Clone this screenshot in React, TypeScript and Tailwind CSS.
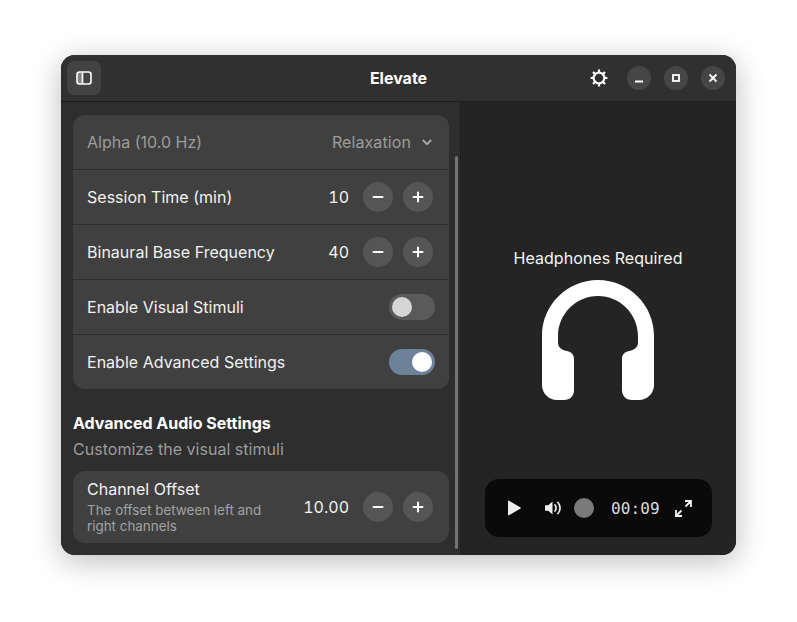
import React from "react";

function Stepper({ value }: { value: string }) {
  return (
    <div className="flex items-center">
      <span className="text-[16px] text-[#f2f2f2] mr-[14px] tabular-nums">{value}</span>
      <button className="w-[30px] h-[30px] rounded-full bg-[#555555] flex items-center justify-center mr-[10px]">
        <svg width="12" height="12" viewBox="0 0 12 12"><path d="M1.5 6h9" stroke="#fff" strokeWidth="2" strokeLinecap="round" /></svg>
      </button>
      <button className="w-[30px] h-[30px] rounded-full bg-[#555555] flex items-center justify-center">
        <svg width="12" height="12" viewBox="0 0 12 12"><path d="M1.5 6h9M6 1.5v9" stroke="#fff" strokeWidth="2" strokeLinecap="round" /></svg>
      </button>
    </div>
  );
}

function Toggle({ on }: { on: boolean }) {
  return (
    <div className={`w-[46px] h-[26px] rounded-full flex items-center px-[2px] ${on ? "bg-[#6d8299] justify-end" : "bg-[#5a5a5a] justify-start"}`}>
      <div className={`w-[20px] h-[20px] mx-[1px] rounded-full ${on ? "bg-white" : "bg-[#d6d6d6]"}`} />
    </div>
  );
}

function Row({ label, children, last }: { label: string; children: React.ReactNode; last?: boolean }) {
  return (
    <div className={`flex items-center justify-between pl-[14px] pr-[16px] ${last ? "h-[54px]" : "h-[55px] border-b border-[#2c2c2c]"}`}>
      <span className="text-[16px] text-[#f2f2f2] tracking-[0.02px]">{label}</span>
      {children}
    </div>
  );
}

export default function App() {
  return (
    <div className="w-[797px] h-[622px] bg-white pt-[55px] pl-[61px] overflow-hidden font-['Inter',sans-serif]">
      <div className="w-[675px] h-[500px] rounded-[14px] overflow-hidden bg-[#242424] flex flex-col shadow-[0_6px_30px_rgba(0,0,0,0.27)]">
        <header className="h-[47px] shrink-0 bg-[#303030] border-b border-[#1f1f1f] flex items-center px-[11px]">
          <div className="flex-1 basis-0 flex">
            <button className="-ml-[5px] w-[34px] h-[34px] rounded-[7px] bg-[#434343] flex items-center justify-center">
              <svg width="16" height="14" viewBox="0 0 16 14" fill="none">
                <rect x="1" y="1" width="14" height="12" rx="2.5" stroke="#fff" strokeWidth="1.6" />
                <rect x="1.5" y="1.5" width="5" height="11" rx="1" fill="#fff" fillOpacity="0.35" />
                <path d="M6.5 1v12" stroke="#fff" strokeWidth="1.6" />
              </svg>
            </button>
          </div>
          <div className="text-center text-[16px] font-bold text-white">Elevate</div>
          <div className="flex-1 basis-0 flex items-center justify-end">
            <svg className="mr-[19px]" width="18" height="18" viewBox="0 0 18 18" fill="none">
              <circle cx="9" cy="9" r="5.4" stroke="#fff" strokeWidth="2.2" />
              <path d="M9 0.6v3M9 14.4v3M0.6 9h3M14.4 9h3M3 3l2.1 2.1M12.9 12.9L15 15M15 3l-2.1 2.1M5.1 12.9L3 15" stroke="#fff" strokeWidth="2.2" />
            </svg>
            <div className="flex items-center gap-[13px]">
              <button className="w-[24px] h-[24px] rounded-full bg-[#464646] flex items-center justify-center">
                <svg width="10" height="10" viewBox="0 0 10 10"><path d="M1 8.5h8" stroke="#fff" strokeWidth="1.8" /></svg>
              </button>
              <button className="w-[24px] h-[24px] rounded-full bg-[#464646] flex items-center justify-center">
                <svg width="10" height="10" viewBox="0 0 10 10" fill="none"><rect x="2" y="2" width="6" height="6" stroke="#fff" strokeWidth="1.8" /></svg>
              </button>
              <button className="w-[24px] h-[24px] rounded-full bg-[#464646] flex items-center justify-center">
                <svg width="10" height="10" viewBox="0 0 10 10"><path d="M1.5 1.5l7 7M8.5 1.5l-7 7" stroke="#fff" strokeWidth="1.8" /></svg>
              </button>
            </div>
          </div>
        </header>

        <div className="flex-1 flex min-h-0">
          <div className="w-[399px] shrink-0 bg-[#2e2e2e] relative overflow-hidden pt-[13px] pl-[12px] pr-[11px]">
            <div className="rounded-[12px] bg-[#404040] overflow-hidden">
              <div className="h-[55px] flex items-center justify-between pl-[14px] pr-[16px] border-b border-[#2c2c2c] text-[16px] text-[#9c9c9c]">
                <span>Alpha (10.0 Hz)</span>
                <span className="flex items-center gap-[10px] tracking-[0.1px]">
                  Relaxation
                  <svg width="12" height="12" viewBox="0 0 12 12" fill="none"><path d="M1.8 4l4.2 4.2L10.2 4" stroke="#a8a8a8" strokeWidth="1.8" /></svg>
                </span>
              </div>
              <Row label="Session Time (min)"><Stepper value="10" /></Row>
              <Row label="Binaural Base Frequency"><Stepper value="40" /></Row>
              <Row label="Enable Visual Stimuli"><div className="-mr-[2px]"><Toggle on={false} /></div></Row>
              <Row label="Enable Advanced Settings" last><div className="-mr-[2px]"><Toggle on /></div></Row>
            </div>
            <h2 className="mt-[24px] text-[16px] leading-[20px] font-bold text-white">Advanced Audio Settings</h2>
            <p className="mt-[6px] text-[16px] leading-[20px] text-[#9c9c9c] tracking-[0.03px]">Customize the visual stimuli</p>
            <div className="mt-[12px] h-[72px] rounded-[12px] bg-[#404040] flex items-center justify-between pl-[14px] pr-[16px]">
              <div className="w-[190px]">
                <div className="text-[16px] leading-[20px] -mt-[1px] text-[#f2f2f2]">Channel Offset</div>
                <div className="text-[13.4px] leading-[16px] mt-[3px] text-[#a3a3a3]">The offset between left and right channels</div>
              </div>
              <Stepper value="10.00" />
            </div>
            <div className="absolute right-[2px] top-[54px] bottom-[6px] w-[3px] rounded-full bg-[#737373]" />
          </div>

          <div className="flex-1 border-l border-[#1f1f1f] bg-[#242424] flex flex-col items-center pt-[146px]">
            <div className="text-[16px] leading-[20px] text-[#f5f5f5] -ml-[1px] tracking-[0.05px]">Headphones Required</div>
            <svg className="mt-[12px] -ml-[2px]" width="112" height="120" viewBox="0 0 112 120" fill="#fff">
              <path fillRule="evenodd" d="M56 0C25 0 0 25 0 56V105C0 113.3 6.7 120 15 120H22C28 120 32 116 32 110V79C32 74.6 29.5 72 25 71C18.5 69.5 16 67 16 62V56C16 34 34 16 56 16C78 16 96 34 96 56V62C96 67 93.5 69.5 87 71C82.5 72 80 74.6 80 79V110C80 116 84 120 90 120H97C105.3 120 112 113.3 112 105V56C112 25 87 0 56 0Z" />
            </svg>
            <div className="mt-[79px] w-[227px] h-[58px] rounded-[14px] bg-[#0a0a0a] flex items-center pl-[22px]">
              <svg width="15" height="16" viewBox="0 0 15 16" fill="#ededed"><path d="M1 1.2v13.6c0 .5.5.8 1 .5l11.6-6.8c.4-.3.4-.8 0-1.1L2 .7c-.5-.3-1-.0-1 .5z" /></svg>
              <svg className="ml-[22px]" width="18" height="16" viewBox="0 0 18 16" fill="none">
                <path d="M1 5.2h3.2L8.5 1.5v13L4.2 10.8H1z" fill="#ededed" />
                <path d="M11 5c1.3 1.8 1.3 4.2 0 6M14 2.5c2.7 3.2 2.7 7.8 0 11" stroke="#ededed" strokeWidth="1.7" strokeLinecap="round" />
              </svg>
              <div className="ml-[12px] w-[20px] h-[20px] rounded-full bg-[#7a7a7a]" />
              <span className="ml-[17px] font-['DejaVu_Sans_Mono',monospace] text-[16px] text-[#dcdcdc] tracking-[0.1px] relative top-[1px]">00:09</span>
              <svg className="ml-[15px]" width="17" height="17" viewBox="0 0 17 17" fill="none">
                <path d="M10 1h6v6M16 1l-5.5 5.5M7 16H1v-6M1 16l5.5-5.5" stroke="#f2f2f2" strokeWidth="1.8" />
              </svg>
            </div>
          </div>
        </div>
      </div>
    </div>
  );
}
